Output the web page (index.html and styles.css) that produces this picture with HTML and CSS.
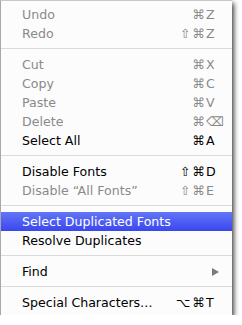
FILE: index.html
```html
<!DOCTYPE html>
<html lang="en">
<head>
    <meta charset="UTF-8">
    <title>Edit Menu</title>
    <link rel="stylesheet" href="styles.css">
</head>
<body>
    <div class="menu">
        <div class="item disabled"><span class="label">Undo</span><span class="mods">⌘</span><span class="key">Z</span></div>
        <div class="item disabled"><span class="label">Redo</span><span class="mods">⇧ ⌘</span><span class="key">Z</span></div>
        <div class="separator"></div>
        <div class="item disabled"><span class="label">Cut</span><span class="mods">⌘</span><span class="key">X</span></div>
        <div class="item disabled"><span class="label">Copy</span><span class="mods">⌘</span><span class="key">C</span></div>
        <div class="item disabled"><span class="label">Paste</span><span class="mods">⌘</span><span class="key">V</span></div>
        <div class="item disabled"><span class="label">Delete</span><span class="mods">⌘</span><span class="key">⌫</span></div>
        <div class="item"><span class="label">Select All</span><span class="mods">⌘</span><span class="key">A</span></div>
        <div class="separator"></div>
        <div class="item"><span class="label">Disable Fonts</span><span class="mods">⇧ ⌘</span><span class="key">D</span></div>
        <div class="item disabled"><span class="label">Disable “All Fonts”</span><span class="mods">⇧ ⌘</span><span class="key">E</span></div>
        <div class="separator"></div>
        <div class="item selected"><span class="label">Select Duplicated Fonts</span></div>
        <div class="item"><span class="label">Resolve Duplicates</span></div>
        <div class="separator"></div>
        <div class="item"><span class="label">Find</span><span class="arrow"></span></div>
        <div class="separator"></div>
        <div class="item"><span class="label">Special Characters…</span><span class="mods">⌥ ⌘</span><span class="key">T</span></div>
    </div>
</body>
</html>
```

FILE: styles.css
```css
body {
    margin: 0;
    background-color: #ffffff;
    font-family: "DejaVu Sans", sans-serif;
    font-size: 12.6px;
}
.menu {
    width: 231px;
    padding: 4px 0 3px;
    background-color: #fcfcfc;
    border-left: 1px solid #a8a8a8;
    border-top: 1px solid #c8c8c8;
    box-shadow: 2px 3px 5px rgba(0, 0, 0, 0.75);
}
.item {
    display: flex;
    align-items: center;
    height: 19px;
    padding: 0 10px 0 21px;
    color: #000;
}
.label {
    flex: 1;
    white-space: nowrap;
}
.mods {
    text-align: right;
    white-space: nowrap;
    word-spacing: -2px;
}
.key {
    width: 16px;
    padding-left: 1px;
}
.disabled {
    color: #8a8a8a;
}
.selected {
    color: #fff;
    background: linear-gradient(#6376f6, #3a46ee);
}
.separator {
    height: 1px;
    margin: 5px 0 6px;
    background-color: #dadada;
}
.arrow {
    width: 0;
    height: 0;
    margin-right: 3px;
    border-top: 4px solid transparent;
    border-bottom: 4px solid transparent;
    border-left: 7px solid #7a7a7a;
}
```
